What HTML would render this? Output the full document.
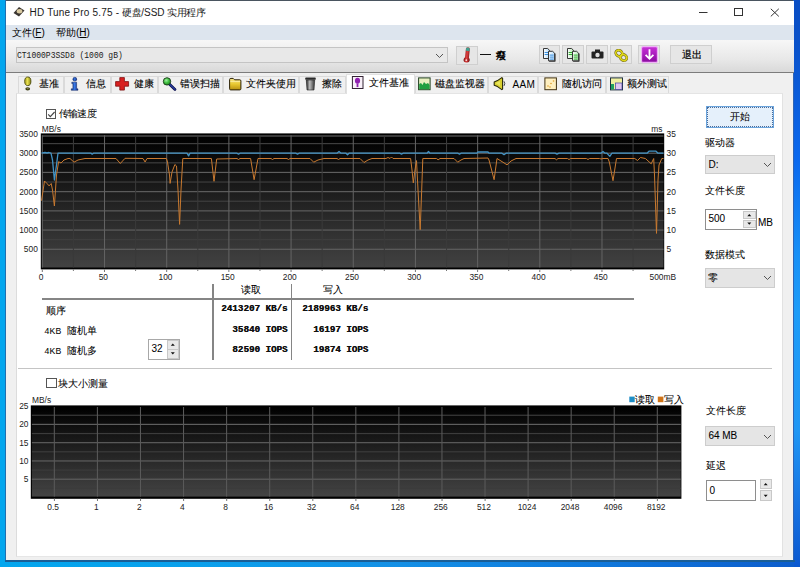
<!DOCTYPE html>
<html><head><meta charset="utf-8">
<style>
*{box-sizing:border-box}
html,body{margin:0;padding:0;width:800px;height:567px;overflow:hidden}
body{position:relative;font-family:"Liberation Sans",sans-serif;color:#000;
 background:linear-gradient(90deg,#03a6ee 0%,#0aa0ec 25%,#1490e6 50%,#0f78dc 75%,#0c5ccc 100%)}
.a{position:absolute}
.t{position:absolute;white-space:nowrap;line-height:1}
#win{left:6px;top:0;width:788px;height:561px;background:#f0f0f0;border-top:1px solid #4a5560}
#lb{left:5px;top:0;width:1px;height:561px;background:#1f6fb0}
#rstrip{left:794px;top:0;width:6px;height:567px;background:linear-gradient(#0a4ec4 0%,#0a52ca 8%,#0a68ee 28%,#1890f6 45%,#1e9cf8 55%,#2096f4 76%,#1670e0 90%,#0a58d0 100%)}
#rb{left:793.4px;top:0;width:1px;height:561px;background:#2f64b4}
#bb{left:5px;top:560px;width:790px;height:1.5px;background:#1a5e96}
#title{left:6px;top:1px;width:788px;height:24px;background:#fff}
#menu{left:6px;top:25px;width:788px;height:14.5px;background:#dde5ee}
#tool{left:6px;top:39.5px;width:788px;height:32.5px;background:linear-gradient(#f7f7f7,#e8e8e8 60%,#d9d9d9)}
#toolline{left:6px;top:71.8px;width:788px;height:1.4px;background:#7c7c7c}
.btn{position:absolute;border:1px solid #cfcfcf;background:#e6e6e6}
.tab{position:absolute;top:76px;height:16.5px;border:1px solid #dadada;border-bottom:none;background:#f0f0f0;font-size:10px}
.tab span{position:absolute;top:1.3px;white-space:nowrap;line-height:1.2;-webkit-text-stroke:0.1px #000}
#panel{left:15.5px;top:92.5px;width:767.5px;height:464.5px;background:#fff;border-left:1px solid #dcdcdc;border-top:1px solid #e4e4e4;border-right:1px solid #e2e2e2;border-bottom:1px solid #e6e6e6}
.lbl{position:absolute;white-space:nowrap;font-size:10px;line-height:1;-webkit-text-stroke:0.05px #000}
.combo{position:absolute;background:#e5e5e5;border:1px solid #cdcdcd}
.spin{position:absolute;background:#fff;border:1px solid #8e8e8e}
.sbtn{position:absolute;background:#e8e8e8;border:1px solid #c8c8c8}
.num{font-family:"Liberation Mono",monospace;font-weight:bold;font-size:9.2px;color:#111;text-shadow:0.25px 0 0 #111}
</style></head><body>
<div class="a" id="win"></div>
<div class="a" id="lb"></div>
<div class="a" id="rstrip"></div>
<div class="a" id="rb"></div>
<div class="a" id="bb"></div>
<div class="a" id="title"></div>
<div class="a" id="menu"></div>
<div class="a" id="tool"></div>
<div class="a" id="toolline"></div>

<!-- title -->
<svg class="a" style="left:12px;top:5px" width="14" height="13" viewBox="0 0 14 13">
 <path d="M1.5 8 L7 2 L12.5 5.5 L7 11.5 Z" fill="#3a3530"/>
 <ellipse cx="7.5" cy="6.3" rx="2.8" ry="2.2" fill="#d8c9a0"/>
</svg>
<div class="t" style="left:29.5px;top:7.5px;font-size:10px;color:#1a1a1a"><span style="letter-spacing:0.2px">HD Tune Pro 5.75 -</span> <span style="letter-spacing:-0.4px">硬盘</span>/SSD <span style="letter-spacing:-0.5px">实用程序</span></div>
<svg class="a" style="left:698.5px;top:11.5px" width="10" height="2"><rect width="8.5" height="1" fill="#333"/></svg>
<svg class="a" style="left:734px;top:8px" width="10" height="9"><rect x="0.5" y="0.5" width="8" height="7" fill="none" stroke="#333" stroke-width="1"/></svg>
<svg class="a" style="left:770px;top:7.5px" width="11" height="10"><path d="M0.8 0.8 L8.8 8.4 M8.8 0.8 L0.8 8.4" stroke="#333" stroke-width="1"/></svg>

<!-- menu -->
<div class="t" style="left:12px;top:27.5px;font-size:10px">文件(<u>F</u>)</div>
<div class="t" style="left:56px;top:27.5px;font-size:10px">帮助(<u>H</u>)</div>

<!-- toolbar -->
<div class="combo" style="left:16px;top:47px;width:432px;height:16px;background:#e8e8e8;border-color:#c4c4c4">
 <div class="t" style="left:0px;top:3.3px;font-family:'Liberation Mono',monospace;font-size:9.6px;color:#1a1a1a;transform:scaleX(0.835);transform-origin:0 0">CT1000P3SSD8 (1000 gB)</div>
 <svg class="a" style="left:418px;top:5px" width="9" height="6"><path d="M1 1 L4.5 4.5 L8 1" fill="none" stroke="#555" stroke-width="1"/></svg>
</div>
<div class="btn" style="left:456px;top:45.5px;width:22px;height:19px"></div>
<svg class="a" style="left:461px;top:46px" width="12" height="18" viewBox="0 0 12 18">
 <defs><linearGradient id="th" x1="0" x2="1"><stop offset="0" stop-color="#801010"/><stop offset="0.45" stop-color="#e04040"/><stop offset="1" stop-color="#701010"/></linearGradient></defs>
 <path d="M4.3 3 Q4.3 1.3 6.2 1.3 Q8.2 1.3 8.2 3 V11.5 Q9.3 12.6 9.3 14 Q9.3 16.6 6.2 16.6 Q3.1 16.6 3.1 14 Q3.1 12.6 4.3 11.5 Z" fill="url(#th)" transform="rotate(6 6 9)"/>
 <path d="M4.4 3 Q4.4 1.4 6.2 1.4 Q8.1 1.4 8.1 3 V5 H4.4 Z" fill="#40a090" transform="rotate(6 6 9)"/>
 <circle cx="5.3" cy="14.2" r="0.9" fill="#fff" opacity="0.8"/>
</svg>
<div class="a" style="left:480px;top:53.5px;width:11px;height:1.3px;background:#111"></div>
<div class="t" style="left:496px;top:51.2px;font-size:10px;font-weight:bold;color:#000">癈</div>

<div class="btn" style="left:538.5px;top:45.3px;width:21.5px;height:19px"></div>
<div class="btn" style="left:562.3px;top:45.3px;width:21.5px;height:19px"></div>
<div class="btn" style="left:586.3px;top:45.3px;width:21.5px;height:19px"></div>
<div class="btn" style="left:610.3px;top:45.3px;width:21.5px;height:19px"></div>
<div class="btn" style="left:638.3px;top:45.3px;width:21.5px;height:19px"></div>
<div class="btn" style="left:670px;top:45.3px;width:42px;height:19px"></div>
<div class="t" style="left:682px;top:50px;font-size:10px;-webkit-text-stroke:0.2px #000">退出</div>
<!-- toolbar icons -->
<svg class="a" style="left:542px;top:47px" width="15" height="15" viewBox="0 0 15 15">
 <defs><linearGradient id="dg1" x1="0" x2="1"><stop offset="0" stop-color="#fff"/><stop offset="1" stop-color="#b8dcf8"/></linearGradient></defs>
 <path d="M1.5 1.5 H5.6 L7.6 3.4 V11.5 H1.5 Z" fill="url(#dg1)" stroke="#222" stroke-width="0.9"/>
 <rect x="2.6" y="5" width="3.8" height="1" fill="#3a90e0"/><rect x="2.6" y="7" width="3.8" height="1" fill="#3a90e0"/>
 <path d="M6.5 4.3 H10.6 L12.6 6.2 V13.8 H6.5 Z" fill="url(#dg1)" stroke="#222" stroke-width="0.9"/>
 <path d="M13.2 6.6 V14.4 H7.1" fill="none" stroke="#333" stroke-width="0.8"/>
 <rect x="7.6" y="7.6" width="4" height="1" fill="#3a90e0"/><rect x="7.6" y="9.6" width="4" height="1" fill="#3a90e0"/><rect x="7.6" y="11.6" width="4" height="1" fill="#3a90e0"/>
</svg>
<svg class="a" style="left:566px;top:47px" width="15" height="15" viewBox="0 0 15 15">
 <defs><linearGradient id="dg2" x1="0" x2="1"><stop offset="0" stop-color="#fff"/><stop offset="1" stop-color="#b8e8b8"/></linearGradient></defs>
 <path d="M1.5 1.5 H5.6 L7.6 3.4 V11.5 H1.5 Z" fill="url(#dg2)" stroke="#222" stroke-width="0.9"/>
 <rect x="2.6" y="5" width="3.8" height="1" fill="#30b030"/><rect x="2.6" y="7" width="3.8" height="1" fill="#30b030"/>
 <path d="M6.5 4.3 H10.6 L12.6 6.2 V13.8 H6.5 Z" fill="url(#dg2)" stroke="#222" stroke-width="0.9"/>
 <path d="M13.2 6.6 V14.4 H7.1" fill="none" stroke="#333" stroke-width="0.8"/>
 <rect x="7.6" y="7.6" width="4" height="1" fill="#30b030"/><rect x="7.6" y="9.6" width="4" height="1" fill="#30b030"/><rect x="7.6" y="11.6" width="4" height="1" fill="#30b030"/>
</svg>
<svg class="a" style="left:590px;top:48px" width="15" height="13" viewBox="0 0 15 13">
 <rect x="1.5" y="3.5" width="12" height="7" rx="1" fill="#222"/>
 <rect x="5" y="1.5" width="5" height="3" fill="#222"/>
 <circle cx="7.5" cy="7" r="2.2" fill="#ddd"/>
</svg>
<svg class="a" style="left:614px;top:49px" width="15" height="13" viewBox="0 0 15 13">
 <g fill="none" stroke-linecap="round">
 <ellipse cx="5" cy="4.3" rx="3.4" ry="2.9" transform="rotate(35 5 4.3)" stroke="#6a6010" stroke-width="2.6"/>
 <ellipse cx="9.5" cy="8.5" rx="3.4" ry="2.9" transform="rotate(35 9.5 8.5)" stroke="#6a6010" stroke-width="2.6"/>
 <ellipse cx="5" cy="4.3" rx="3.4" ry="2.9" transform="rotate(35 5 4.3)" stroke="#e0d818" stroke-width="1.6"/>
 <ellipse cx="9.5" cy="8.5" rx="3.4" ry="2.9" transform="rotate(35 9.5 8.5)" stroke="#e0d818" stroke-width="1.6"/>
 </g>
</svg>
<svg class="a" style="left:640.5px;top:46.3px" width="17" height="17" viewBox="0 0 17 17">
 <defs><linearGradient id="pu" x1="0" y1="0" x2="0" y2="1"><stop offset="0" stop-color="#c830d8"/><stop offset="1" stop-color="#8a0aa0"/></linearGradient></defs>
 <rect x="0.6" y="0.6" width="15.8" height="15.8" rx="1.5" fill="url(#pu)" stroke="#f0b0f8" stroke-width="1.1"/>
 <path d="M8.5 3.2 V12.8 M4.6 8.8 L8.5 12.8 L12.4 8.8" fill="none" stroke="#fff" stroke-width="1.8"/>
</svg>

<!-- tabs -->
<div class="tab" style="left:17.6px;width:46.2px"><span style="left:20.8px">基准</span></div>
<div class="tab" style="left:63.8px;width:46.8px"><span style="left:21.1px">信息</span></div>
<div class="tab" style="left:110.6px;width:47.2px"><span style="left:22.1px">健康</span></div>
<div class="tab" style="left:157.8px;width:65.3px"><span style="left:21.5px">错误扫描</span></div>
<div class="tab" style="left:223.1px;width:76.3px"><span style="left:21.9px">文件夹使用</span></div>
<div class="tab" style="left:299.4px;width:46.2px"><span style="left:21.9px">擦除</span></div>
<div class="tab" style="left:415px;width:73.1px"><span style="left:19.3px">磁盘监视器</span></div>
<div class="tab" style="left:488.1px;width:50px"><span style="left:23.4px;top:2px;font-size:10px;letter-spacing:0.4px;-webkit-text-stroke:0">AAM</span></div>
<div class="tab" style="left:538.1px;width:67.5px"><span style="left:22.5px">随机访问</span></div>
<div class="tab" style="left:605.6px;width:63.8px"><span style="left:20.6px">额外测试</span></div>
<div class="tab" style="left:345.6px;width:69.4px;top:73.6px;height:20.4px;background:#fff;border-color:#e0e0e0;z-index:2"><span style="left:22.4px;top:2.6px">文件基准</span></div>
<svg class="a" style="left:0;top:0;z-index:3" width="700" height="96" viewBox="0 0 700 96">
 <!-- 1 bulb -->
 <defs><linearGradient id="bl" x1="0" x2="1"><stop offset="0" stop-color="#a8a020"/><stop offset="0.45" stop-color="#e8e050"/><stop offset="1" stop-color="#8a8410"/></linearGradient></defs>
 <ellipse cx="27.8" cy="81.3" rx="3.1" ry="4.3" fill="url(#bl)" stroke="#4a4a10" stroke-width="0.9"/>
 <ellipse cx="27.7" cy="88.8" rx="2.4" ry="1.6" fill="#3a3a10"/>
 <ellipse cx="27.7" cy="88.6" rx="1.2" ry="0.6" fill="#8a8a50"/>
 <!-- 2 info i -->
 <defs><linearGradient id="ib" x1="0" x2="1"><stop offset="0" stop-color="#103a90"/><stop offset="0.5" stop-color="#3a7ae8"/><stop offset="1" stop-color="#102a80"/></linearGradient></defs>
 <circle cx="74.8" cy="79.2" r="1.9" fill="url(#ib)" stroke="#0a2060" stroke-width="0.5"/>
 <path d="M71.8 82.2 H76.6 V88.8 H77.9 V90.3 H71.3 V88.8 H72.9 V83.6 H71.8 Z" fill="url(#ib)" stroke="#0a2060" stroke-width="0.5"/>
 <!-- 3 red cross -->
 <path d="M119.8 77.6 H124.4 V81.6 H128.6 V86.2 H124.4 V90.1 H119.8 V86.2 H115.6 V81.6 H119.8 Z" fill="#d82020" stroke="#801010" stroke-width="0.8"/>
 <!-- 4 magnifier -->
 <path d="M169.3 84 L175 89.4" stroke="#0a1050" stroke-width="2.8" stroke-linecap="round"/>
 <path d="M169.3 84 L175 89.4" stroke="#2a40a0" stroke-width="1.2" stroke-linecap="round"/>
 <defs><radialGradient id="mg" cx="0.4" cy="0.35" r="0.7"><stop offset="0" stop-color="#a0f0a0"/><stop offset="0.5" stop-color="#40c040"/><stop offset="1" stop-color="#208020"/></radialGradient></defs>
 <circle cx="167" cy="81.4" r="3.7" fill="url(#mg)" stroke="#1a3a1a" stroke-width="0.9"/>
 <!-- 5 folder -->
 <defs><linearGradient id="fo" x1="0" y1="0" x2="0" y2="1"><stop offset="0" stop-color="#f8e890"/><stop offset="0.5" stop-color="#e8c830"/><stop offset="1" stop-color="#b89010"/></linearGradient></defs>
 <path d="M229.6 79.6 Q229.6 78.4 230.8 78.4 H233.2 L234.6 79.8 H239.8 Q240.9 79.8 240.9 80.9 V88.8 Q240.9 89.9 239.8 89.9 H230.7 Q229.6 89.9 229.6 88.8 Z" fill="url(#fo)" stroke="#2a2008" stroke-width="1"/>
 <path d="M230.3 81.4 H240.2" stroke="#fff6c0" stroke-width="0.7"/>
 <!-- 6 trash -->
 <defs><linearGradient id="tr" x1="0" x2="1"><stop offset="0" stop-color="#222"/><stop offset="0.4" stop-color="#bbb"/><stop offset="1" stop-color="#333"/></linearGradient></defs>
 <rect x="305.3" y="77.6" width="10.4" height="2.2" rx="0.6" fill="#2a2a2a"/>
 <path d="M306.3 80 H314.7 L314 90 H307 Z" fill="url(#tr)" stroke="#222" stroke-width="0.6"/>
 <!-- 7 doc purple bulb -->
 <rect x="352.4" y="76.5" width="10.6" height="12" fill="#f8f0f8" stroke="#332233" stroke-width="1"/>
 <ellipse cx="357.5" cy="80.8" rx="2.6" ry="3" fill="#9020b0"/>
 <rect x="356.6" y="83.5" width="1.8" height="3.6" fill="#9020b0"/>
 <!-- 8 monitor -->
 <rect x="418.6" y="77.9" width="11.5" height="11.8" fill="#e8f0c0" stroke="#204020" stroke-width="1"/>
 <path d="M419.2 89.2 V84 L421 83 L422.5 85 L424 82 L426 84 L428 83 L429.6 85 V89.2 Z" fill="#20a040"/>
 <!-- 9 speaker -->
 <path d="M494.2 82 L497.5 80.6 L501.8 77.6 L502.6 78.2 V89 L501.8 89.6 L497.5 86.6 L494.2 85.2 Z" fill="#d8d030" stroke="#2a2a08" stroke-width="1.1" stroke-linejoin="round"/>
 <path d="M495.5 83 L500 81 V86 Z" fill="#f0f070" opacity="0.7"/>
 <path d="M504 81.3 Q505.6 83.6 504 85.9" fill="none" stroke="#333" stroke-width="0.9"/>
 <!-- 10 random -->
 <rect x="544.9" y="77.9" width="11.5" height="11.8" fill="#fff0c0" stroke="#403010" stroke-width="1"/>
 <circle cx="548" cy="86" r="0.8" fill="#e0a030"/><circle cx="551" cy="83.5" r="0.8" fill="#e0a030"/><circle cx="553.5" cy="81" r="0.8" fill="#e0a030"/><circle cx="550" cy="87" r="0.8" fill="#e0a030"/>
 <!-- 11 extra -->
 <rect x="610.5" y="77.9" width="12" height="12" fill="#f0f0a0" stroke="#203040" stroke-width="1"/>
 <rect x="615.5" y="83" width="6.5" height="6.4" fill="#e0c8f0" stroke="#4040a0" stroke-width="0.7"/>
 <rect x="611" y="84" width="3" height="5.5" fill="#20a060"/>
</svg>


<div class="a" id="panel"></div>
<svg class="a" style="left:0;top:0" width="800" height="567" viewBox="0 0 800 567">
<defs><linearGradient id="g1" x1="0" y1="0" x2="0" y2="1"><stop offset="0" stop-color="#000"/><stop offset="1" stop-color="#424242"/></linearGradient></defs>
<rect x="40.8" y="133.4" width="623.4" height="136" fill="#000"/>
<rect x="41.9" y="135.3" width="621.6" height="132.2" fill="url(#g1)"/>
<rect x="41.9" y="258.29" width="621.6" height="1.2" fill="#3e3e3e"/>
<rect x="41.9" y="248.69" width="621.6" height="1.2" fill="#5e5e5e"/>
<rect x="41.9" y="239.08" width="621.6" height="1.2" fill="#3e3e3e"/>
<rect x="41.9" y="229.47" width="621.6" height="1.2" fill="#5e5e5e"/>
<rect x="41.9" y="219.86" width="621.6" height="1.2" fill="#3e3e3e"/>
<rect x="41.9" y="210.26" width="621.6" height="1.2" fill="#5e5e5e"/>
<rect x="41.9" y="200.65" width="621.6" height="1.2" fill="#3e3e3e"/>
<rect x="41.9" y="191.04" width="621.6" height="1.2" fill="#5e5e5e"/>
<rect x="41.9" y="181.43" width="621.6" height="1.2" fill="#3e3e3e"/>
<rect x="41.9" y="171.83" width="621.6" height="1.2" fill="#5e5e5e"/>
<rect x="41.9" y="162.22" width="621.6" height="1.2" fill="#3e3e3e"/>
<rect x="41.9" y="152.61" width="621.6" height="1.2" fill="#5e5e5e"/>
<rect x="41.9" y="143.00" width="621.6" height="1.2" fill="#3e3e3e"/>
<rect x="41.9" y="135.40" width="621.6" height="1.2" fill="#5e5e5e"/>
<rect x="41.80" y="135.3" width="1.05" height="132.2" fill="#626262"/>
<rect x="41.80" y="269.4" width="1" height="2.6" fill="#777"/>
<rect x="72.89" y="135.3" width="1.05" height="132.2" fill="#3a3a3a"/>
<rect x="72.89" y="269.4" width="1" height="1.6" fill="#777"/>
<rect x="103.98" y="135.3" width="1.05" height="132.2" fill="#626262"/>
<rect x="103.98" y="269.4" width="1" height="2.6" fill="#777"/>
<rect x="135.08" y="135.3" width="1.05" height="132.2" fill="#3a3a3a"/>
<rect x="135.08" y="269.4" width="1" height="1.6" fill="#777"/>
<rect x="166.17" y="135.3" width="1.05" height="132.2" fill="#626262"/>
<rect x="166.17" y="269.4" width="1" height="2.6" fill="#777"/>
<rect x="197.26" y="135.3" width="1.05" height="132.2" fill="#3a3a3a"/>
<rect x="197.26" y="269.4" width="1" height="1.6" fill="#777"/>
<rect x="228.36" y="135.3" width="1.05" height="132.2" fill="#626262"/>
<rect x="228.36" y="269.4" width="1" height="2.6" fill="#777"/>
<rect x="259.45" y="135.3" width="1.05" height="132.2" fill="#3a3a3a"/>
<rect x="259.45" y="269.4" width="1" height="1.6" fill="#777"/>
<rect x="290.54" y="135.3" width="1.05" height="132.2" fill="#626262"/>
<rect x="290.54" y="269.4" width="1" height="2.6" fill="#777"/>
<rect x="321.63" y="135.3" width="1.05" height="132.2" fill="#3a3a3a"/>
<rect x="321.63" y="269.4" width="1" height="1.6" fill="#777"/>
<rect x="352.73" y="135.3" width="1.05" height="132.2" fill="#626262"/>
<rect x="352.73" y="269.4" width="1" height="2.6" fill="#777"/>
<rect x="383.82" y="135.3" width="1.05" height="132.2" fill="#3a3a3a"/>
<rect x="383.82" y="269.4" width="1" height="1.6" fill="#777"/>
<rect x="414.91" y="135.3" width="1.05" height="132.2" fill="#626262"/>
<rect x="414.91" y="269.4" width="1" height="2.6" fill="#777"/>
<rect x="446.00" y="135.3" width="1.05" height="132.2" fill="#3a3a3a"/>
<rect x="446.00" y="269.4" width="1" height="1.6" fill="#777"/>
<rect x="477.10" y="135.3" width="1.05" height="132.2" fill="#626262"/>
<rect x="477.10" y="269.4" width="1" height="2.6" fill="#777"/>
<rect x="508.19" y="135.3" width="1.05" height="132.2" fill="#3a3a3a"/>
<rect x="508.19" y="269.4" width="1" height="1.6" fill="#777"/>
<rect x="539.28" y="135.3" width="1.05" height="132.2" fill="#626262"/>
<rect x="539.28" y="269.4" width="1" height="2.6" fill="#777"/>
<rect x="570.37" y="135.3" width="1.05" height="132.2" fill="#3a3a3a"/>
<rect x="570.37" y="269.4" width="1" height="1.6" fill="#777"/>
<rect x="601.46" y="135.3" width="1.05" height="132.2" fill="#626262"/>
<rect x="601.46" y="269.4" width="1" height="2.6" fill="#777"/>
<rect x="632.56" y="135.3" width="1.05" height="132.2" fill="#3a3a3a"/>
<rect x="632.56" y="269.4" width="1" height="1.6" fill="#777"/>
<polyline points="41.5,200.7 44.5,181.0 47.0,183.5 49.1,185.9 51.2,183.5 52.5,190.0 54.4,206.0 56.5,175.0 58.6,161.7 61.0,163.0 64.0,160.0 68.0,158.5 70.0,158.5 74.0,162.2 78.0,160.0 85.0,158.5 116.0,158.5 120.3,163.5 125.0,158.3 143.0,158.5 145.1,162.0 147.0,158.5 166.4,158.5 167.5,162.0 169.5,175.0 170.1,183.4 172.0,172.0 174.9,164.5 176.5,166.0 178.0,190.0 179.6,224.4 181.0,190.0 182.8,158.5 211.4,158.5 214.0,181.3 216.7,159.0 237.0,158.5 238.5,159.5 240.0,158.5 250.6,158.5 254.1,179.7 258.0,158.5 271.0,158.5 272.5,159.5 274.0,158.5 287.0,158.5 288.5,159.5 290.0,158.5 310.0,158.5 313.7,162.2 318.0,160.0 324.0,158.5 337.0,158.5 338.5,159.5 340.0,158.5 360.0,158.5 364.0,162.5 368.0,160.0 372.0,158.5 386.0,158.5 388.0,157.5 390.0,158.5 391.5,157.0 393.0,158.5 410.6,158.5 412.0,170.0 413.3,182.9 415.0,170.0 416.5,160.6 418.0,190.0 420.2,229.7 421.7,190.0 422.8,158.5 436.5,158.5 438.1,159.8 440.0,158.5 454.0,158.5 457.7,162.2 461.0,160.0 464.0,158.5 488.0,158.0 489.0,160.0 494.1,179.7 497.0,158.5 505.0,163.5 507.0,164.9 511.0,161.0 516.0,158.5 555.0,158.5 556.5,159.8 558.0,158.5 567.5,158.5 569.0,159.5 570.5,158.5 586.5,158.5 588.0,159.5 589.5,158.5 599.5,158.5 601.0,159.0 603.0,158.5 608.0,158.5 609.3,162.0 613.0,180.7 616.5,158.5 634.8,158.5 637.5,160.5 640.5,157.5 645.4,158.5 651.2,163.8 653.7,158.5 654.5,175.0 656.5,233.4 658.0,180.0 659.0,165.0 661.8,158.5 663.5,158.5" fill="none" stroke="#c97a30" stroke-width="1.0" stroke-linejoin="round"/>
<polyline points="41.5,153.2 45.0,152.5 47.0,153.0 49.0,152.5 51.0,153.2 52.5,160.0 54.4,180.0 56.5,165.0 58.0,153.2 91.0,153.2 92.2,154.2 93.5,153.2 187.0,153.2 188.6,155.9 190.0,153.2 237.0,153.2 238.5,154.2 240.0,153.2 296.0,153.2 297.5,154.2 299.0,153.2 337.0,153.2 339.0,151.5 341.0,153.2 346.0,153.2 347.5,154.7 349.0,153.2 400.0,153.2 401.5,154.2 403.0,153.2 427.0,153.2 428.5,151.5 430.0,153.2 458.0,153.2 459.5,154.2 461.0,153.2 477.0,153.2 478.0,152.0 488.0,152.0 489.0,153.2 502.0,153.2 504.0,154.7 506.0,153.2 555.0,153.2 557.0,154.2 559.0,153.2 601.0,153.2 603.0,151.5 605.0,153.2 607.0,153.2 609.8,156.4 612.0,153.2 647.0,153.2 649.0,151.2 656.0,151.2 658.0,153.2 663.5,153.2" fill="none" stroke="#4393c4" stroke-width="1.3" stroke-linejoin="round"/>
<text x="37.8" y="252.3" text-anchor="end" font-family="Liberation Sans" font-size="8.4" fill="#222">500</text>
<text x="37.8" y="233.1" text-anchor="end" font-family="Liberation Sans" font-size="8.4" fill="#222">1000</text>
<text x="37.8" y="213.9" text-anchor="end" font-family="Liberation Sans" font-size="8.4" fill="#222">1500</text>
<text x="37.8" y="194.6" text-anchor="end" font-family="Liberation Sans" font-size="8.4" fill="#222">2000</text>
<text x="37.8" y="175.4" text-anchor="end" font-family="Liberation Sans" font-size="8.4" fill="#222">2500</text>
<text x="37.8" y="156.2" text-anchor="end" font-family="Liberation Sans" font-size="8.4" fill="#222">3000</text>
<text x="37.8" y="137.0" text-anchor="end" font-family="Liberation Sans" font-size="8.4" fill="#222">3500</text>
<text x="666.5" y="252.3" font-family="Liberation Sans" font-size="8.4" fill="#222">5</text>
<text x="666.5" y="233.1" font-family="Liberation Sans" font-size="8.4" fill="#222">10</text>
<text x="666.5" y="213.9" font-family="Liberation Sans" font-size="8.4" fill="#222">15</text>
<text x="666.5" y="194.6" font-family="Liberation Sans" font-size="8.4" fill="#222">20</text>
<text x="666.5" y="175.4" font-family="Liberation Sans" font-size="8.4" fill="#222">25</text>
<text x="666.5" y="156.2" font-family="Liberation Sans" font-size="8.4" fill="#222">30</text>
<text x="666.5" y="137.0" font-family="Liberation Sans" font-size="8.4" fill="#222">35</text>
<text x="41.8" y="131.8" font-family="Liberation Sans" font-size="8.4" fill="#222">MB/s</text>
<text x="651.3" y="132" font-family="Liberation Sans" font-size="8.4" fill="#222">ms</text>
<text x="41.1" y="279.6" text-anchor="middle" font-family="Liberation Sans" font-size="8.4" fill="#222">0</text>
<text x="103.3" y="279.6" text-anchor="middle" font-family="Liberation Sans" font-size="8.4" fill="#222">50</text>
<text x="165.5" y="279.6" text-anchor="middle" font-family="Liberation Sans" font-size="8.4" fill="#222">100</text>
<text x="227.7" y="279.6" text-anchor="middle" font-family="Liberation Sans" font-size="8.4" fill="#222">150</text>
<text x="289.8" y="279.6" text-anchor="middle" font-family="Liberation Sans" font-size="8.4" fill="#222">200</text>
<text x="352.0" y="279.6" text-anchor="middle" font-family="Liberation Sans" font-size="8.4" fill="#222">250</text>
<text x="414.2" y="279.6" text-anchor="middle" font-family="Liberation Sans" font-size="8.4" fill="#222">300</text>
<text x="476.4" y="279.6" text-anchor="middle" font-family="Liberation Sans" font-size="8.4" fill="#222">350</text>
<text x="538.6" y="279.6" text-anchor="middle" font-family="Liberation Sans" font-size="8.4" fill="#222">400</text>
<text x="600.8" y="279.6" text-anchor="middle" font-family="Liberation Sans" font-size="8.4" fill="#222">450</text>
<text x="676.1" y="279.6" text-anchor="end" font-family="Liberation Sans" font-size="8.4" fill="#222">500mB</text>
<defs><linearGradient id="g2" x1="0" y1="0" x2="0" y2="1"><stop offset="0" stop-color="#000"/><stop offset="1" stop-color="#444"/></linearGradient></defs>
<rect x="30.8" y="405.4" width="650.6" height="93.4" fill="#000"/>
<rect x="31.9" y="407" width="648.8" height="89.6" fill="url(#g2)"/>
<rect x="31.9" y="487.76" width="648.8" height="1.2" fill="#3c3c3c"/>
<rect x="31.9" y="478.62" width="648.8" height="1.2" fill="#5e5e5e"/>
<rect x="31.9" y="469.49" width="648.8" height="1.2" fill="#3c3c3c"/>
<rect x="31.9" y="460.35" width="648.8" height="1.2" fill="#5e5e5e"/>
<rect x="31.9" y="451.21" width="648.8" height="1.2" fill="#3c3c3c"/>
<rect x="31.9" y="442.07" width="648.8" height="1.2" fill="#5e5e5e"/>
<rect x="31.9" y="432.94" width="648.8" height="1.2" fill="#3c3c3c"/>
<rect x="31.9" y="423.80" width="648.8" height="1.2" fill="#5e5e5e"/>
<rect x="31.9" y="414.66" width="648.8" height="1.2" fill="#3c3c3c"/>
<rect x="53.80" y="407" width="1.05" height="89.6" fill="#5a5a5a"/>
<rect x="53.90" y="498.6" width="1" height="2.4" fill="#777"/>
<text x="53.2" y="509.7" text-anchor="middle" font-family="Liberation Sans" font-size="8.4" fill="#222">0.5</text>
<rect x="96.87" y="407" width="1.05" height="89.6" fill="#5a5a5a"/>
<rect x="96.97" y="498.6" width="1" height="2.4" fill="#777"/>
<text x="96.3" y="509.7" text-anchor="middle" font-family="Liberation Sans" font-size="8.4" fill="#222">1</text>
<rect x="139.94" y="407" width="1.05" height="89.6" fill="#5a5a5a"/>
<rect x="140.04" y="498.6" width="1" height="2.4" fill="#777"/>
<text x="139.3" y="509.7" text-anchor="middle" font-family="Liberation Sans" font-size="8.4" fill="#222">2</text>
<rect x="183.01" y="407" width="1.05" height="89.6" fill="#5a5a5a"/>
<rect x="183.11" y="498.6" width="1" height="2.4" fill="#777"/>
<text x="182.4" y="509.7" text-anchor="middle" font-family="Liberation Sans" font-size="8.4" fill="#222">4</text>
<rect x="226.08" y="407" width="1.05" height="89.6" fill="#5a5a5a"/>
<rect x="226.18" y="498.6" width="1" height="2.4" fill="#777"/>
<text x="225.5" y="509.7" text-anchor="middle" font-family="Liberation Sans" font-size="8.4" fill="#222">8</text>
<rect x="269.15" y="407" width="1.05" height="89.6" fill="#5a5a5a"/>
<rect x="269.25" y="498.6" width="1" height="2.4" fill="#777"/>
<text x="268.6" y="509.7" text-anchor="middle" font-family="Liberation Sans" font-size="8.4" fill="#222">16</text>
<rect x="312.22" y="407" width="1.05" height="89.6" fill="#5a5a5a"/>
<rect x="312.32" y="498.6" width="1" height="2.4" fill="#777"/>
<text x="311.6" y="509.7" text-anchor="middle" font-family="Liberation Sans" font-size="8.4" fill="#222">32</text>
<rect x="355.29" y="407" width="1.05" height="89.6" fill="#5a5a5a"/>
<rect x="355.39" y="498.6" width="1" height="2.4" fill="#777"/>
<text x="354.7" y="509.7" text-anchor="middle" font-family="Liberation Sans" font-size="8.4" fill="#222">64</text>
<rect x="398.36" y="407" width="1.05" height="89.6" fill="#5a5a5a"/>
<rect x="398.46" y="498.6" width="1" height="2.4" fill="#777"/>
<text x="397.8" y="509.7" text-anchor="middle" font-family="Liberation Sans" font-size="8.4" fill="#222">128</text>
<rect x="441.43" y="407" width="1.05" height="89.6" fill="#5a5a5a"/>
<rect x="441.53" y="498.6" width="1" height="2.4" fill="#777"/>
<text x="440.8" y="509.7" text-anchor="middle" font-family="Liberation Sans" font-size="8.4" fill="#222">256</text>
<rect x="484.50" y="407" width="1.05" height="89.6" fill="#5a5a5a"/>
<rect x="484.60" y="498.6" width="1" height="2.4" fill="#777"/>
<text x="483.9" y="509.7" text-anchor="middle" font-family="Liberation Sans" font-size="8.4" fill="#222">512</text>
<rect x="527.57" y="407" width="1.05" height="89.6" fill="#5a5a5a"/>
<rect x="527.67" y="498.6" width="1" height="2.4" fill="#777"/>
<text x="527.0" y="509.7" text-anchor="middle" font-family="Liberation Sans" font-size="8.4" fill="#222">1024</text>
<rect x="570.64" y="407" width="1.05" height="89.6" fill="#5a5a5a"/>
<rect x="570.74" y="498.6" width="1" height="2.4" fill="#777"/>
<text x="570.0" y="509.7" text-anchor="middle" font-family="Liberation Sans" font-size="8.4" fill="#222">2048</text>
<rect x="613.71" y="407" width="1.05" height="89.6" fill="#5a5a5a"/>
<rect x="613.81" y="498.6" width="1" height="2.4" fill="#777"/>
<text x="613.1" y="509.7" text-anchor="middle" font-family="Liberation Sans" font-size="8.4" fill="#222">4096</text>
<rect x="656.78" y="407" width="1.05" height="89.6" fill="#5a5a5a"/>
<rect x="656.88" y="498.6" width="1" height="2.4" fill="#777"/>
<text x="656.2" y="509.7" text-anchor="middle" font-family="Liberation Sans" font-size="8.4" fill="#222">8192</text>
<text x="28.5" y="482.2" text-anchor="end" font-family="Liberation Sans" font-size="8.4" fill="#222">5</text>
<text x="28.5" y="463.9" text-anchor="end" font-family="Liberation Sans" font-size="8.4" fill="#222">10</text>
<text x="28.5" y="445.7" text-anchor="end" font-family="Liberation Sans" font-size="8.4" fill="#222">15</text>
<text x="28.5" y="427.4" text-anchor="end" font-family="Liberation Sans" font-size="8.4" fill="#222">20</text>
<text x="28.5" y="409.1" text-anchor="end" font-family="Liberation Sans" font-size="8.4" fill="#222">25</text>
<text x="32" y="402.6" font-family="Liberation Sans" font-size="8.4" fill="#222">MB/s</text>
<rect x="629.3" y="396.6" width="5.4" height="5.6" fill="#1e8ec6"/>
<rect x="657.8" y="396.6" width="5.6" height="5.6" fill="#d07418"/>
</svg>
<!-- checkbox 1 -->
<div class="a" style="left:46px;top:108.6px;width:10.4px;height:10.2px;border:1px solid #555;background:#fff"></div>
<svg class="a" style="left:46px;top:108.6px" width="11" height="11"><path d="M2.2 5.3 L4.3 7.6 L8.6 3" fill="none" stroke="#444" stroke-width="1.1"/></svg>
<div class="lbl" style="left:59px;top:109px;font-size:10px;letter-spacing:-0.8px">传输速度</div>
<!-- table -->
<div class="a" style="left:42px;top:297.8px;width:592px;height:2px;background:#858585"></div>
<div class="a" style="left:212px;top:283.7px;width:1.5px;height:76.5px;background:#858585"></div>
<div class="a" style="left:290.6px;top:283.7px;width:1.5px;height:76.5px;background:#858585"></div>
<div class="lbl" style="left:241.3px;top:285.3px">读取</div>
<div class="lbl" style="left:322.5px;top:285.3px">写入</div>
<div class="lbl" style="left:46.2px;top:306px">顺序</div>
<div class="lbl" style="left:44.5px;top:325.8px"><span style="font-size:8.7px;letter-spacing:0.15px">4KB</span>&nbsp;&nbsp;随机单</div>
<div class="lbl" style="left:44.5px;top:345.8px"><span style="font-size:8.7px;letter-spacing:0.15px">4KB</span>&nbsp;&nbsp;随机多</div>
<div class="t num" style="left:220px;width:67.5px;text-align:right;top:303.5px">2413207 KB/s</div>
<div class="t num" style="left:300px;width:68.3px;text-align:right;top:303.5px">2189963 KB/s</div>
<div class="t num" style="left:220px;width:67.5px;text-align:right;top:324.5px">35840 IOPS</div>
<div class="t num" style="left:300px;width:68.3px;text-align:right;top:324.5px">16197 IOPS</div>
<div class="t num" style="left:220px;width:67.5px;text-align:right;top:344.5px">82590 IOPS</div>
<div class="t num" style="left:300px;width:68.3px;text-align:right;top:344.5px">19874 IOPS</div>
<!-- spin 32 -->
<div class="spin" style="left:148px;top:338.8px;width:32px;height:21px;border-color:#a8a8a8"></div>
<div class="lbl" style="left:151.5px;top:344px;font-size:10px;-webkit-text-stroke:0">32</div>
<div class="sbtn" style="left:167.3px;top:340px;width:11.5px;height:9.5px"></div>
<div class="sbtn" style="left:167.3px;top:349.4px;width:11.5px;height:9.5px"></div>
<svg class="a" style="left:167.3px;top:340px" width="12" height="20"><path d="M3.8 5.8 H7.8 L5.8 3.6 Z M3.8 12.3 H7.8 L5.8 14.5 Z" fill="#111"/></svg>
<!-- separator -->
<div class="a" style="left:18px;top:367.8px;width:754px;height:1.3px;background:#c4c4c4"></div>
<!-- checkbox 2 -->
<div class="a" style="left:46px;top:378.2px;width:10.5px;height:10.2px;border:1px solid #555;background:#fff"></div>
<div class="lbl" style="left:58.3px;top:378.6px;font-size:9.7px">块大小测量</div>
<!-- legend -->
<div class="lbl" style="left:634.5px;top:395px">读取</div>
<div class="lbl" style="left:663.5px;top:395px">写入</div>
<!-- right panel -->
<div class="a" style="left:706.2px;top:106.1px;width:68px;height:22px;border:1px solid #6aa4dc;background:#e5f0fb"></div>
<div class="a" style="left:707.4px;top:107.3px;width:65.6px;height:19.6px;border:1px dotted #4a6a98"></div>
<div class="lbl" style="left:730px;top:112px">开始</div>
<div class="lbl" style="left:705px;top:137.5px">驱动器</div>
<div class="combo" style="left:705px;top:154.7px;width:70px;height:19.5px"></div>
<div class="lbl" style="left:708.5px;top:160px;font-size:10px">D:</div>
<svg class="a" style="left:763px;top:162px" width="9" height="6"><path d="M1 1 L4.5 4.5 L8 1" fill="none" stroke="#555" stroke-width="1"/></svg>
<div class="lbl" style="left:705px;top:186px">文件长度</div>
<div class="spin" style="left:705px;top:209.2px;width:51.7px;height:20.4px"></div>
<div class="lbl" style="left:708.5px;top:213.5px;font-size:10px">500</div>
<div class="sbtn" style="left:742.9px;top:211px;width:12.7px;height:8.2px"></div>
<div class="sbtn" style="left:742.9px;top:219.5px;width:12.7px;height:8.4px"></div>
<svg class="a" style="left:742.9px;top:211px" width="13" height="17"><path d="M4.3 5.3 H8.3 L6.3 3.1 Z M4.3 11.6 H8.3 L6.3 13.8 Z" fill="#111"/></svg>
<div class="lbl" style="left:757.9px;top:218px;font-size:10px">MB</div>
<div class="lbl" style="left:705px;top:250px">数据模式</div>
<div class="combo" style="left:705px;top:267.9px;width:70px;height:19.8px"></div>
<div class="lbl" style="left:707.6px;top:273px">零</div>
<svg class="a" style="left:763px;top:275px" width="9" height="6"><path d="M1 1 L4.5 4.5 L8 1" fill="none" stroke="#555" stroke-width="1"/></svg>
<div class="lbl" style="left:705.5px;top:406px">文件长度</div>
<div class="combo" style="left:705px;top:426px;width:70px;height:20px"></div>
<div class="lbl" style="left:708.4px;top:431px;font-size:10px">64 MB</div>
<svg class="a" style="left:763px;top:433.5px" width="9" height="6"><path d="M1 1 L4.5 4.5 L8 1" fill="none" stroke="#555" stroke-width="1"/></svg>
<div class="lbl" style="left:705.5px;top:461px">延迟</div>
<div class="spin" style="left:706px;top:480px;width:50.2px;height:20.8px"></div>
<div class="lbl" style="left:709.4px;top:485.5px;font-size:10px">0</div>
<div class="sbtn" style="left:760.3px;top:478.5px;width:11.3px;height:10.1px"></div>
<div class="sbtn" style="left:760.3px;top:489.8px;width:11.3px;height:11px"></div>
<svg class="a" style="left:760.3px;top:478.5px" width="12" height="23"><path d="M3.7 6.3 H7.7 L5.7 4.1 Z M3.7 15.8 H7.7 L5.7 18 Z" fill="#111"/></svg>


</body></html>
